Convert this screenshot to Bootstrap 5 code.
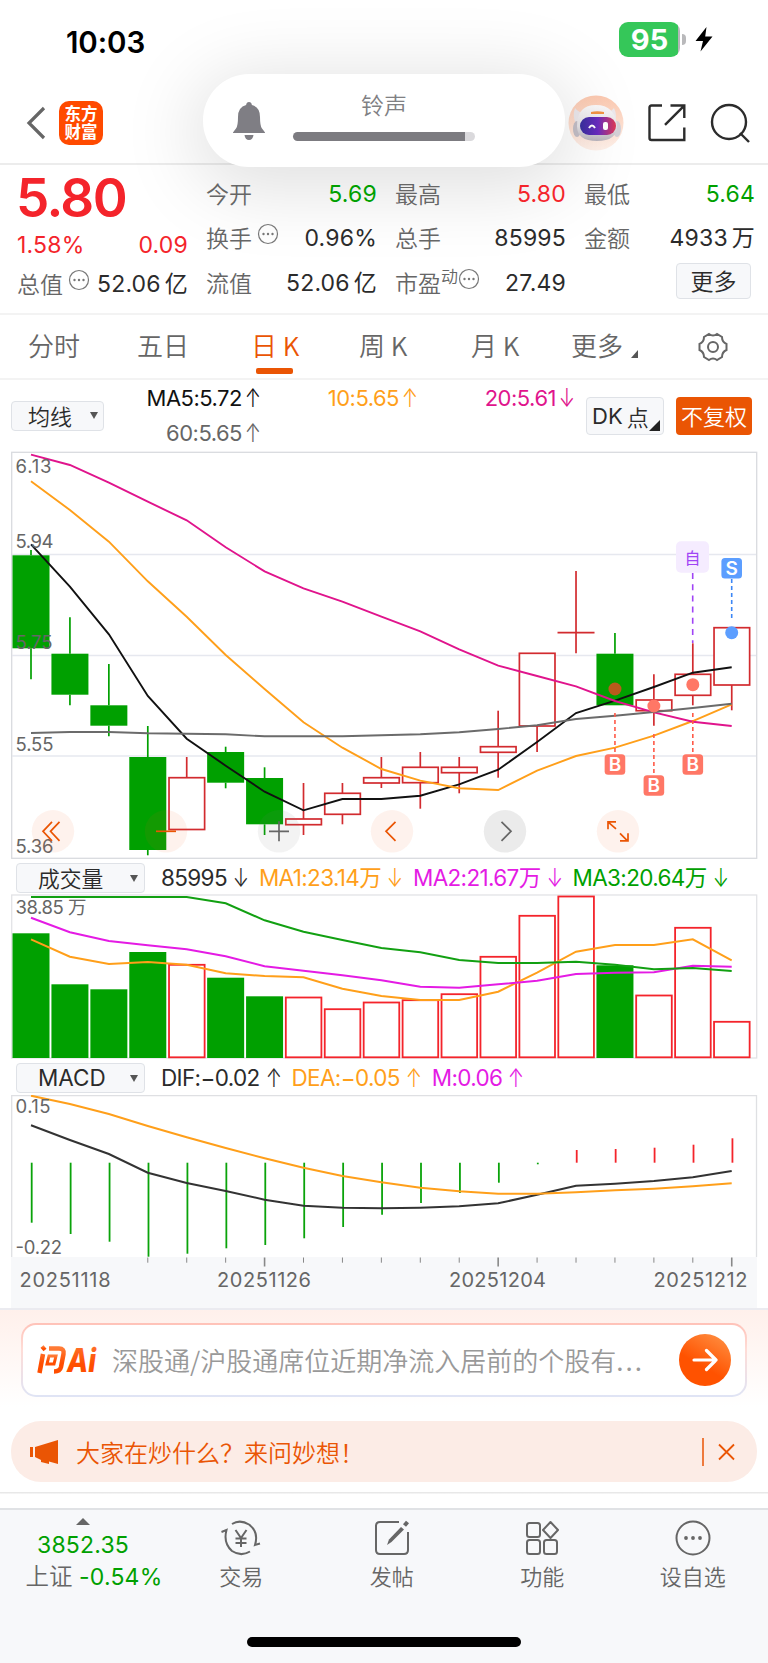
<!DOCTYPE html>
<html lang="zh-CN">
<head>
<meta charset="utf-8">
<meta name="viewport" content="width=device-width, initial-scale=1">
<title>东方财富 日K</title>
<link href="https://cdn.jsdelivr.net/npm/bootstrap@5.3.0/dist/css/bootstrap.min.css" rel="stylesheet">
<script src="https://cdn.jsdelivr.net/npm/bootstrap@5.3.0/dist/js/bootstrap.bundle.min.js"></script>
<style>
:root{--up:#f4242b;--down:#00a000;--brand:#ea5504;--ink:#2b2b2b;--mut:#666}
body{font-family:Inter,"Noto Sans CJK SC",sans-serif;font-weight:400;color:var(--ink);background:#fff;width:768px;height:1663px;overflow:hidden;font-size:23px;line-height:1}
svg{display:block;flex:none}
svg text{font-family:Inter,"Noto Sans CJK SC",sans-serif}
.up{color:var(--up)}.down{color:var(--down)}.mut{color:var(--mut)}
.cjk{font-family:"Noto Sans CJK SC",sans-serif;font-weight:350}
.num{font-size:23px;letter-spacing:.2px;white-space:nowrap}
.unit{margin-left:4px}
.ar{display:flex;justify-content:center;width:20px;font-size:26px;font-weight:300;letter-spacing:0;line-height:22px;margin-left:4px;transform:scaleX(.75)}
/* status bar and header */
.statusbar{height:75px;padding:4px 55px 0 66px}
.clock{font-size:29.5px;font-weight:600;color:#000;letter-spacing:-.1px;margin-top:7px}
.batt{width:61px;height:35px;border-radius:9px;background:linear-gradient(90deg,#35c759 59px,#b5b5b8 59px);color:#fff;font-weight:700;font-size:29px}
.batt-tip{width:4px;height:11px;border-radius:0 4px 4px 0;background:#b9b9bb;margin:0 9px 0 2px}
.apphead{height:90px;border-bottom:2px solid #ececec;padding:7px 18px 0 26px}
.logo{width:44px;height:44px;border-radius:10px;background:#ff4a00;color:#fff;font:700 16.5px/18px "Noto Sans CJK SC",sans-serif;text-align:center;padding-top:3px;margin-left:13px}
.volume{position:absolute;left:203px;top:74px;width:362px;height:93px;border-radius:46px;background:#fff;box-shadow:0 12px 75px 10px rgba(0,0,0,.125);padding:0 29px}
.volume .cjk{font-size:23px;color:#808083}
.vinfo{margin:-8px 0 0 27px}
.vtrack{width:182px;height:9px;border-radius:5px;background:linear-gradient(90deg,#7c7b80 172px,#dad9dc 172px);margin-top:16px}
/* quote */
.stats{height:148px;padding:8px 11px 0 17px}
.stats .first{width:171px;margin-right:18px}
.price{font-size:53px;font-weight:600;letter-spacing:-1.6px;height:50px;line-height:50px;margin:0 0 1px -1px}
.cells{display:grid;grid-template-columns:repeat(3,171px);column-gap:18px;grid-template-rows:43px 45px 45px}
.cell{display:flex;align-items:center;justify-content:space-between}
.cell .cjk{font-size:23px;margin-top:-2px}
.cell svg{margin:-5px 0 0 5px}
.cell .cjk.pe{font-size:17px;margin-top:-6px}
.cell .cjk.more{width:75px;height:36px;margin-top:-6px}
.tool{background:#f7f8fa;border:1.5px solid #dfe2e7;border-radius:4px;color:var(--ink)}
/* period tabs */
.tabs{height:67px;border-top:2px solid #f3f3f3;border-bottom:2px solid #f3f3f3;padding-left:28px;font-size:26px;color:var(--mut);display:grid;grid-template-columns:109px 114px 108px 112px 100px 127px 30px}
.tabs>span{margin-top:-4px}
.tabs .on{color:var(--brand);position:relative}
.tabs .on:after{content:"";position:absolute;left:5px;bottom:-16px;width:37px;height:6px;border-radius:2px;background:var(--brand)}
.tri{width:0;height:0;border-left:7px solid transparent;border-bottom:8px solid #555}
.caret-d{width:0;height:0;border:4px solid transparent;border-top:7px solid #555;border-bottom:0}
/* moving averages */
.legend1{height:71px;padding:0 16px 0 11px}
.ma{display:grid;grid-template-columns:159px 157px 157px;width:473px;grid-template-rows:35px 35px;font-size:22px;letter-spacing:-.5px}
.ma>span{display:flex;align-items:center;justify-content:flex-end;white-space:nowrap}
.ma .ar{margin-left:1px}
.avg{width:93px;height:30px;margin-top:21px;padding:0 5px 2px 16px;font-size:22px}
.dk{width:78px;height:38px;margin-top:17px;padding:0 5px;font-size:22px;margin-left:9px}
.dk .tri{border-left-width:11px;border-bottom:11px solid #222;align-self:flex-end;margin-bottom:3px}
.fq{width:76px;height:38px;margin:17px 0 0 12px;padding-bottom:3px;border-radius:4px;background:var(--brand);color:#fff;font-size:22px}
.chartbox{display:block;width:768px}
.legend2{height:34px;padding-left:16px;font-size:22.5px}
.legend2 .tool{width:129px;height:30px;padding:0 6px 0 21px;margin-right:16px}
.legend2 .tool .cjk{font-size:21.800px}
.l{white-space:nowrap;margin-right:8px;letter-spacing:-.65px;display:flex;align-items:center}
/* assistant and notice */
.ai{height:112px;border-top:2px solid #ebebf0;background:linear-gradient(#fff0eb,#fff 88%);padding:13px 21px 0}
.aibox{height:74px;border-radius:15px;border:2px solid transparent;background:linear-gradient(#fff,#fff) padding-box,linear-gradient(#ffc2b8,#ffdcd6 35%,#dfe4f5) border-box;padding:0 14px 0 14px}
.aibox .q{font-size:26px;color:#999;margin-left:13px;white-space:nowrap}
.q b{font-weight:400;letter-spacing:2px}
.go{width:52px;height:52px;border-radius:50%;background:linear-gradient(210deg,#ff8a3c 10%,#ff5200 60%)}
.notice{height:61px;border-radius:30px;background:#fcece6;margin:1px 11px 0;padding:0 22px 0 18px;color:var(--brand);font-size:24px}
.notice .cjk{margin-left:17px}
.gapline{height:26px;background:linear-gradient(#e8e8e8,#e8e8e8) 0 10px/100% 1.5px no-repeat}
/* bottom bar */
.bottombar{height:155px;background:#f7f8fa;border-top:2px solid #e0e2e5;color:var(--mut)}
.bottombar .cjk{font-size:22px}
.idx{width:166px}
.nv{width:150.5px}
.nv svg{margin-top:9px;margin-bottom:7px}
.ix1{margin-top:9px}
.ix2{margin:7px 0 0 22px}
.bottombar .ix2 .cjk{font-size:23.500px}
.home{width:274px;height:10px;border-radius:5px;background:#000;margin-bottom:16px}
</style>
</head>
<body>
<header class="position-relative">
  <div class="statusbar d-flex align-items-center justify-content-between">
    <span class="clock">10:03</span>
    <div class="d-flex align-items-center">
      <div class="batt d-flex align-items-center justify-content-center">95</div><div class="batt-tip"></div>
      <svg width="18" height="25" viewBox="0 0 18 25"><path d="M11.500 0 0.500 14H8L5.500 24.500 17.500 9.500H10.200Z"/></svg>
    </div>
  </div>
  <div class="apphead d-flex align-items-center">
    <svg width="20" height="34" viewBox="0 0 20 34"><path d="M18 2 3 17 18 32" fill="none" stroke="#666" stroke-width="3.200"/></svg>
    <div class="logo">东方<br>财富</div>
    <div class="ms-auto d-flex align-items-center">
      <svg width="56" height="56" viewBox="0 0 56 56"><defs><linearGradient id="pg" x2="0" y2="1"><stop stop-color="#fcc9b0"/><stop offset="1" stop-color="#fff1ea"/></linearGradient><linearGradient id="vg"><stop stop-color="#38309e"/><stop offset=".5" stop-color="#6a2cc0"/><stop offset="1" stop-color="#e03a55"/></linearGradient><linearGradient id="hg" x2="0" y2="1"><stop stop-color="#faf9fa"/><stop offset=".6" stop-color="#e6e3e6"/><stop offset="1" stop-color="#b9b4bc"/></linearGradient></defs>
        <circle cx="28" cy="28" r="27.500" fill="url(#pg)"/><path d="M7 13q4 5 9 5l-8 11q-4-8-1-16ZM46 13q-4 5-9 5l9 11q4-8 0-16Z" fill="#ece8ec"/><ellipse cx="9" cy="34" rx="4" ry="8" fill="#c4bfc7"/><ellipse cx="49" cy="34" rx="4" ry="8" fill="#d5d1d7"/><path d="M9 31Q9 10 28 10T49 31Q49 46 29 46T9 31Z" fill="url(#hg)"/><path d="M23 17q6-1.500 13 0v2H23Z" fill="#f39445"/><rect x="12" y="22" width="36" height="18" rx="9" fill="url(#vg)"/><path d="M21 33q3-5 6 0" fill="none" stroke="#fff" stroke-width="2"/><rect x="35" y="27" width="5" height="8" rx="2" fill="#fff"/></svg>
      <svg class="ms-4" width="38" height="38" viewBox="0 0 38 38" fill="none" stroke="#2c2c2c" stroke-width="2.400"><path d="M14 1.500H3.500q-2 0-2 2V34q0 2 2 2H36.300V23.500M22.500 1.500H36.300V14M36 1.800 17 20.800"/></svg>
      <svg class="ms-4" width="40" height="40" viewBox="0 0 40 40" fill="none" stroke="#2c2c2c" stroke-width="2.400"><circle cx="19" cy="19" r="17"/><path d="m30 30 9 9"/></svg>
    </div>
  </div>
  <div class="volume d-flex align-items-center">
    <svg width="34" height="38" viewBox="0 0 34 38" fill="#7f7e84"><path d="M17 0q2.500 0 2.900 3Q28 5 28 15q0 9 2 11.500t3 4V31H1v-.5Q2 29 4 26.500T6 15Q6 5 14.100 3 14.500 0 17 0ZM12.500 33h9q-.7 5-4.500 5t-4.500-5Z"/></svg>
    <div class="vinfo d-flex flex-column align-items-center">
      <span class="cjk">铃声</span><div class="vtrack"></div>
    </div>
  </div>
</header>

<section class="stats d-flex position-relative">
  <div class="first">
    <div class="price up">5.80</div>
    <div class="d-flex justify-content-between align-items-center up num" style="height:43px"><span>1.58%</span><span>0.09</span></div>
    <div class="cell" style="height:34px"><span class="d-flex"><span class="cjk mut">总值</span><svg width="22" height="22"><use href="#d3"/></svg></span><span class="num">52.06<span class="unit">亿</span></span></div>
  </div>
  <div class="cells">
    <div class="cell"><span class="cjk mut">今开</span><span class="num down">5.69</span></div>
    <div class="cell"><span class="cjk mut">最高</span><span class="num up">5.80</span></div>
    <div class="cell"><span class="cjk mut">最低</span><span class="num down">5.64</span></div>
    <div class="cell"><span class="d-flex"><span class="cjk mut">换手</span><svg width="22" height="22"><use href="#d3"/></svg></span><span class="num">0.96%</span></div>
    <div class="cell"><span class="cjk mut">总手</span><span class="num">85995</span></div>
    <div class="cell"><span class="cjk mut">金额</span><span class="num">4933<span class="unit">万</span></span></div>
    <div class="cell"><span class="cjk mut">流值</span><span class="num">52.06<span class="unit">亿</span></span></div>
    <div class="cell"><span class="d-flex"><span class="cjk mut">市盈</span><span class="cjk mut pe">动</span><svg class="ms-0" width="22" height="22"><use href="#d3"/></svg></span><span class="num">27.49</span></div>
    <div class="cell justify-content-end pe-1"><span class="tool cjk more d-flex align-items-center justify-content-center">更多</span></div>
  </div>
</section>
<svg width="0" height="0" class="position-absolute"><symbol id="d3" viewBox="0 0 22 22"><circle cx="11" cy="11" r="9.500" fill="none" stroke="#777" stroke-width="1.200"/><g fill="#777"><circle cx="6.500" cy="11" r="1.200"/><circle cx="11" cy="11" r="1.200"/><circle cx="15.500" cy="11" r="1.200"/></g></symbol></svg>

<nav class="tabs align-items-center">
  <span class="cjk">分时</span><span class="cjk">五日</span><span class="cjk on">日 K</span><span class="cjk">周 K</span><span class="cjk">月 K</span>
  <span class="d-flex align-items-end"><span class="cjk">更多</span><i class="tri ms-2"></i></span>
  <svg width="30" height="30" viewBox="0 0 30 30" fill="none" stroke="#666" stroke-width="2"><circle cx="15" cy="15" r="5"/><path d="M11 2q4 3 8 0l5 3q0 5 4.500 7v6q-4.500 2-4.500 7l-5 3q-4-3-8 0l-5-3q0-5-4.500-7v-6Q6 10 6 5Z"/></svg>
</nav>

<div class="legend1 d-flex">
  <div class="tool cjk avg d-flex align-items-center justify-content-between">均线<i class="caret-d"></i></div>
  <div class="ma">
    <span style="color:#111">MA5:5.72<span class="ar">↑</span></span><span style="color:#ff9f1a">10:5.65<span class="ar">↑</span></span><span style="color:#e0148c">20:5.61<span class="ar">↓</span></span>
    <span class="mut">60:5.65<span class="ar">↑</span></span>
  </div>
  <div class="tool dk d-flex align-items-center">DK<span class="cjk ms-1">点</span><i class="tri ms-auto"></i></div>
  <div class="fq cjk d-flex align-items-center justify-content-center">不复权</div>
</div>

<svg class="chartbox" id="kline" height="408" viewBox="0 451 768 408"></svg>
<div class="legend2 d-flex align-items-center pt-1">
  <div class="tool d-flex align-items-center justify-content-between"><span class="cjk">成交量</span><i class="caret-d"></i></div>
  <span class="l">85995<span class="ar">↓</span></span><span class="l" style="color:#ff9f1a">MA1:23.14万<span class="ar">↓</span></span><span class="l" style="color:#e41be4">MA2:21.67万<span class="ar">↓</span></span><span class="l down">MA3:20.64万<span class="ar">↓</span></span>
</div>
<svg class="chartbox" id="vol" height="168" viewBox="0 893 768 168"></svg>
<div class="legend2 d-flex align-items-center">
  <div class="tool d-flex align-items-center justify-content-between"><span>MACD</span><i class="caret-d"></i></div>
  <span class="l">DIF:−0.02<span class="ar">↑</span></span><span class="l" style="color:#ff9f1a">DEA:−0.05<span class="ar">↑</span></span><span class="l" style="color:#e41be4">M:0.06<span class="ar">↑</span></span>
</div>
<svg class="chartbox" id="macd" height="213" viewBox="0 1095 768 213"></svg>

<section class="ai">
  <div class="aibox d-flex align-items-center">
    <svg width="62" height="30" viewBox="0 0 62 30"><defs><linearGradient id="lg" x2="0" y2="1"><stop stop-color="#ff7a35"/><stop offset=".6" stop-color="#ff4e00"/></linearGradient></defs><g fill="none" stroke="url(#lg)" stroke-width="4.500"><path d="M6 9 2.500 28M12 3.500H22Q27.500 3.500 26.500 9L24 22Q23 26.500 17 26.500"/><path d="M12 11h7l-2 8h-7Z" stroke-width="3"/><path d="M5 1.500l3 3.500" stroke-width="4"/></g><text x="30" y="27" font-size="32" font-weight="800" font-style="italic" fill="url(#lg)" textLength="29" lengthAdjust="spacingAndGlyphs">Ai</text></svg>
    <span class="cjk q">深股通/沪股通席位近期净流入居前的个股有<b>...</b></span>
    <div class="go ms-auto d-flex align-items-center justify-content-center"><svg width="26" height="24" viewBox="0 0 26 24" fill="none" stroke="#fff" stroke-width="3.200" stroke-linecap="round" stroke-linejoin="round"><path d="M2 12H24M14.500 2.500 24 12l-9.500 9.500"/></svg></div>
  </div>
</section>
<div class="notice d-flex align-items-center">
  <svg width="30" height="26" viewBox="0 0 30 26" fill="#ea5504"><path d="M1 8h3v10H1ZM6 8 29 1V25l-9-2.500V25l-8-2v-2L6 18Z"/></svg>
  <span class="cjk">大家在炒什么？来问妙想！</span>
  <svg class="ms-auto" width="33" height="28" viewBox="0 0 33 28" stroke="#ea5504" fill="none"><path d="M1 0V28" stroke-width="1.500"/><path d="m17 6.500 15 15m0-15-15 15" stroke-width="1.800"/></svg>
</div>
<div class="gapline"></div>
<footer class="bottombar d-flex flex-column align-items-center">
  <div class="d-flex w-100">
    <div class="idx d-flex flex-column align-items-center"><svg class="mt-2" width="14" height="7"><path d="M7 0 14 7H0Z" fill="#666"/></svg><span class="num down ix1">3852.35</span><span class="ix2 text-nowrap"><span class="cjk">上证</span> <span class="num down">-0.54%</span></span></div>
    <div class="nv d-flex flex-column align-items-center"><svg width="42" height="38" viewBox="0 0 42 38" fill="none" stroke="#666" stroke-width="2"><path d="M12 5Q20 0 29 5.500 39 13 35 26l5-1.500M30 32.500Q21 38 12 32 3 24 6.500 11L1.500 13"/><path d="m15.500 11 5.500 8 5.500-8M21 19v9M15.500 19.500h11M15.500 24h11"/></svg><span class="cjk">交易</span></div>
    <div class="nv d-flex flex-column align-items-center"><svg width="38" height="38" viewBox="0 0 38 38" fill="none" stroke="#666" stroke-width="2"><path d="M26 3H7Q3 3 3 7V31q0 4 4 4H31q4 0 4-4V13"/><path d="M31.500 6.500 34.500 3" stroke-width="4"/><path d="M14 26 16 20.500 28 8l3 2.500L18.500 23Z" fill="#666" stroke="none"/></svg><span class="cjk">发帖</span></div>
    <div class="nv d-flex flex-column align-items-center"><svg width="38" height="38" viewBox="0 0 38 38" fill="none" stroke="#666" stroke-width="2"><rect x="4" y="4" width="13" height="14" rx="2.500"/><rect x="4" y="21" width="13" height="14" rx="2.500"/><rect x="21" y="21" width="13" height="14" rx="2.500"/><path d="m27.500 3 7.500 8-7.500 8-7.500-8Z" stroke-linejoin="round"/></svg><span class="cjk">功能</span></div>
    <div class="nv d-flex flex-column align-items-center"><svg width="38" height="38" viewBox="0 0 38 38"><circle cx="19" cy="19" r="16.500" fill="none" stroke="#666" stroke-width="2"/><g fill="#666"><circle cx="12" cy="19" r="1.900"/><circle cx="19" cy="19" r="1.900"/><circle cx="26" cy="19" r="1.900"/></g></svg><span class="cjk">设自选</span></div>
  </div>
  <div class="home mt-auto"></div>
</footer>

<script>
// Day index -> x centre of its column
const cx = i => 31 + 38.93 * i;
const poly = (ys, c, w = 2) => `<polyline fill="none" stroke="${c}" stroke-width="${w}" points="${ys.map((y, i) => cx(i).toFixed(1) + ',' + y).join(' ')}"/>`;
const line = (x1, y1, x2, y2, c, w = 1.7, d = '') => `<line x1="${x1}" y1="${y1}" x2="${x2}" y2="${y2}" stroke="${c}" stroke-width="${w}" stroke-dasharray="${d}"/>`;
const label = (x, y, t, w, s = 18.5) => `<text x="${x}" y="${y}" font-size="${s}" fill="#666" textLength="${w}">${t}</text>`;
const G = '#00a000', R = '#d22b2f', V = '#f4242b', O = '#ff9f1a', P = '#e0148c', M = '#e41be4', grid = '#e6e8ef';

// [rising, body top, body bottom, high, low]
const days = [[0,555.3,648.3,550,679.3],[0,653.7,694.7,617.3,705.3],[0,705.3,725.7,664,736.3],[0,757,850,726,855.3],[1,777.7,829.5,757,829.5],[0,752,782.7,746.7,788.3],[0,778,824.3,767.3,835],[1,819,824.7,783,835],[1,793.3,814.3,783,824.3],[1,777.7,783,757,788],[1,767.3,782.7,752,808.7],[1,767.3,772.7,757,793.3],[1,746.7,752.3,710.7,777.7],[1,653.3,726,653.3,752],[1,632.7,632.7,571,653.3],[0,653.7,705.3,633,705.3],[1,700,710.7,674.3,725.7],[1,674.3,695.3,643.3,705.3],[1,627.7,685,627.7,710.3]];
let k = `<rect x="11.700" y="452.300" width="745" height="406" fill="#fff" stroke="#d9dbdf" stroke-width="1.300"/>`;
[554.5, 655.5, 756].forEach(y => k += line(12, y, 756, y, grid, 1.5));
days.forEach(([r, t, b, h, l], i) => {
  const x = cx(i), c = r ? R : G;
  k += line(x, h, x, t, c) + line(x, b, x, l, c);
  k += !r ? `<rect x="${x - 18.5}" y="${t}" width="37" height="${b - t}" fill="${c}"/>`
    : b === t ? line(x - 18.5, t, x + 18.5, t, c)
    : `<rect x="${x - 17.7}" y="${t}" width="35.600" height="${b - t}" fill="#fff" stroke="${c}" stroke-width="1.700"/>`;
});
k += poly([544.3,586.7,634.3,696,738.7,765.7,791.7,810.3,799,799,795.7,784.3,769.7,742,713,700.7,687,672.7,667.3], '#111', 1.9)
  + poly([481.3,510,541.7,581.3,616.7,655,689,722.3,747.7,769,780.7,788.3,790,770.7,756,747.7,735.7,721,704.3], O, 1.9)
  + poly([454.7,465,482.7,501.7,520.3,547.3,571.3,588.3,601.7,616.7,631.3,649.3,665.7,676,686.3,701,712.3,721.7,726], P, 1.9)
  + poly([733,732,732,733.3,733.7,734.3,736.3,736.3,736.3,735.3,734.3,732.3,729,725.3,719,715.7,712,708,703.7], '#6b6b6b', 1.9);
k += label(15.5,472.5,'6.13',36) + label(15.5,548,'5.94',38) + label(15.5,649,'5.75',37) + label(15.5,750.5,'5.55',38) + label(15.5,852.5,'5.36',38);
// Trade markers
[[15,689,764.5,713,'#b95a1c'],[16,706,785.5,734,'#ff7766'],[17,684.7,764.5,713,'#ff7766']].forEach(([i, dy, by, ly, c]) => {
  const x = cx(i);
  k += `<circle cx="${x}" cy="${dy}" r="6.500" fill="${c}"/>` + line(x, ly, x, by - 10, '#ff5a48', 1.6, '4 3')
    + `<rect x="${x - 10.3}" y="${by - 10.3}" width="20.600" height="20.600" rx="3.500" fill="#ff7766"/><text x="${x}" y="${by + 6.8}" font-size="19" font-weight="600" fill="#fff" text-anchor="middle">B</text>`;
});
k += `<rect x="676" y="541.300" width="33" height="31.500" rx="5" fill="#f5ecff"/><text x="692.500" y="564" font-size="16" fill="#a044f5" text-anchor="middle">自</text>` + line(692.7, 573, 692.7, 643, '#a044f5', 1.6, '6 5.2');
k += `<rect x="721.400" y="558" width="20.600" height="20.600" rx="3.500" fill="#5c9eff"/><text x="731.700" y="575.200" font-size="19" font-weight="600" fill="#fff" text-anchor="middle">S</text>` + line(731.7, 579, 731.7, 621, '#3c86f5', 1.6, '4 3') + `<circle cx="731.700" cy="632.700" r="6.500" fill="#5c9eff"/>`;
// Floating chart controls
[['M-1-9.500-10 0-1 9.500M6.500-9.500-2.500 0 6.500 9.500',0],['M-10 0H10',0],['M-10 0H10M0-10V10',1],['M3.500-9.500-6 0 3.500 9.500',0],['M-3.500-9.500 6 0-3.500 9.500',2],['M-10-2V-9.500H-2M-9.500-9-2-2.500M2 2 9.500 9.500M10 2V9.500H2',0]].forEach(([d, g], i) => {
  k += `<g transform="translate(${53 + 113 * i} 831.300)"><circle r="21.200" fill="${g ? '#777' : '#f0581a'}" fill-opacity="${g === 2 ? .15 : g ? .09 : .08}"/><path d="${d}" fill="none" stroke="${g ? '#666' : '#ea5504'}" stroke-width="1.700"/></g>`;
});
kline.innerHTML = k;

// Volume
const tops = [933.3,984.3,989.3,952,964.3,977.7,996.3,997,1008.7,1002,999.7,993.7,956.3,915.3,896,965.3,995,927.3,1021.3];
let v = `<rect x="11.700" y="895" width="745" height="163" fill="none" stroke="#e2e3e6" stroke-width="1.300"/>`;
tops.forEach((t, i) => v += [0,1,2,3,5,6,15].includes(i)
  ? `<rect x="${cx(i) - 18.5}" y="${t}" width="37" height="${1058 - t}" fill="${G}"/>`
  : `<rect x="${cx(i) - 17.7}" y="${t + .5}" width="35.600" height="${1056.8 - t}" fill="#fff" stroke="${V}" stroke-width="1.800"/>`);
const s = (a, o) => a.map(n => +(o + n / 3).toFixed(1));
v += poly(s([268,320,342,336,344,370,378,382,416,438,450,450,425,368,305,285,285,268,331],850), O)
  + poly(s([203,247,273,286,298,319,349,362,376,391,410,413,403,392,372,368,367,347,350],850), M)
  + poly(s([141,141,141,141,141,160,211,245,270,294,307,330,339,339,335,344,358,354,363],850), '#12a012');
v += label(15.5, 913.5, '38.85 万', 71);
vol.innerHTML = v;

// MACD with date axis
const ends = [488,522,545,590,581,565,555,535,501,464,429,399,368,313,270,267,263,254,235];
let m = `<rect x="11" y="1257" width="746" height="51" fill="#f7f8fa"/><path d="M11.700 1257V1095.500H756.500V1257" fill="none" stroke="#dfe0e3" stroke-width="1.300"/>`;
s(ends, 1060).forEach((y, i) => m += line(cx(i) + .7, 1162.7, cx(i) + .7, y, i > 13 ? V : '#0aa30a', 1.8));
m += poly(s([196,240,282,338,369,393,419,437,443,445,443,439,430,404,377,371,363,352,333],1060), '#333')
  + poly(s([107,132,162,198,232,264,295,323,348,367,383,394,401,401,397,391,386,379,370],1060), O);
for (let i = 3; i < 19; i++) m += line(cx(i), 1257.5, cx(i), i % 6 ? 1262.7 : 1266.5, '#888', i % 6 ? 1 : 1.6);
m += label(15.5,1113,'0.15',35) + label(15.5,1253.5,'-0.22',46.5);
m += label(19.5,1287,'20251118',91,20) + label(217,1287,'20251126',94,20) + label(449,1287,'20251204',97,20) + label(653.5,1287,'20251212',94,20);
macd.innerHTML = m;
</script>
</body>
</html>
